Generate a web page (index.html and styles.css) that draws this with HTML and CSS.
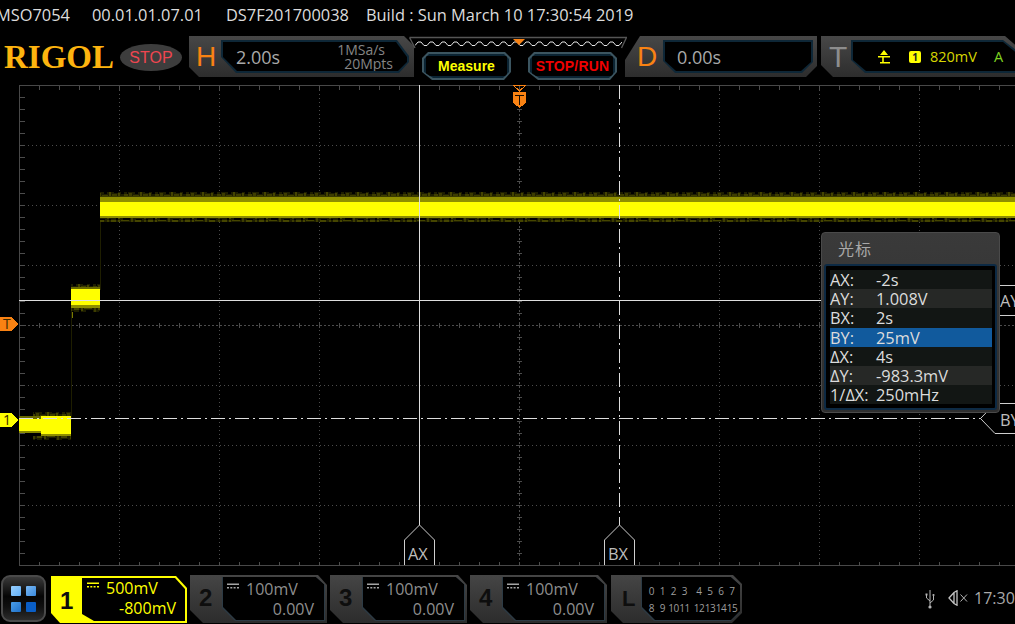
FILE: index.html
```html
<!DOCTYPE html>
<html lang="en">
<head>
<meta charset="utf-8">
<title>MSO7054</title>
<link rel="stylesheet" href="styles.css">
</head>
<body>
<div class="scope">
  <header class="titlebar">
    <span class="t-model">MSO7054</span>
    <span class="t-ver">00.01.01.07.01</span>
    <span class="t-serial">DS7F201700038</span>
    <span class="t-build">Build : Sun March 10 17:30:54 2019</span>
  </header>

  <div class="toolbar">
    <div class="logo">RIGOL</div>
    <div class="pill">STOP</div>

    <div class="panel panel-h">
      <span class="letter letter-orange">H</span>
      <div class="inner-edge edge-h"><div class="inner-fill fill-h">
        <span class="big">2.00s</span>
        <span class="rate"><span>1MSa/s</span><span class="rate-b">20Mpts</span></span>
      </div></div>
    </div>

    <div class="center">
      <svg class="overview" width="218" height="14" viewBox="0 0 218 14">
        <defs>
          <pattern id="zig" width="12" height="8" patternUnits="userSpaceOnUse" x="6" y="4">
            <polyline points="0,5.5 3,2 6,2 9,5.5 12,5.5" fill="none" stroke="#e6e6e6" stroke-width="1"/>
          </pattern>
        </defs>
        <path d="M.5 1.5H217.5L212.5 12M.5 1.5L6 12" fill="none" stroke="#555" stroke-width="1.4"/>
        <rect x="6" y="4" width="207" height="8" fill="url(#zig)"/>
        <path d="M104 3H116L110 9Z" fill="#f98213"/>
      </svg>
      <div class="btn-row">
        <div class="hw-btn"><div class="hw-edge"><div class="hw-fill measure">Measure</div></div></div>
        <div class="hw-btn"><div class="hw-edge"><div class="hw-fill run">STOP/RUN</div></div></div>
      </div>
    </div>

    <div class="panel panel-d">
      <span class="letter letter-orange letter-d">D</span>
      <div class="inner-edge edge-d"><div class="inner-fill fill-d">
        <span class="big">0.00s</span>
      </div></div>
    </div>

    <div class="panel panel-t">
      <span class="letter letter-gray">T</span>
      <div class="inner-edge edge-t"><div class="inner-fill fill-t">
        <svg class="edge-icon" width="12" height="14" viewBox="0 0 12 14">
          <path d="M6 0L10 5H2ZM0 6H12V7.4H5.8V12H12V13.5H2V12H4.2V7.4H0Z" fill="#ffff00"/>
        </svg>
        <span class="badge">1</span>
        <span class="level">820mV</span>
        <span class="mode">A</span>
      </div></div>
    </div>
  </div>

  <main class="screen">
    <svg class="grid" width="1015" height="490" viewBox="0 80 1015 490">
      <defs>
        <pattern id="fringe-up" width="31" height="4" patternUnits="userSpaceOnUse">
          <rect width="31" height="4" fill="#1e1e00"/>
          <rect x="0" y="2" width="4" height="2" fill="#3d3d00"/>
          <rect x="5" y="1" width="3" height="3" fill="#3d3d00"/>
          <rect x="9" y="3" width="6" height="1" fill="#3d3d00"/>
          <rect x="16" y="0" width="2" height="4" fill="#454500"/>
          <rect x="19" y="2" width="5" height="2" fill="#3d3d00"/>
          <rect x="25" y="1" width="2" height="3" fill="#454500"/>
          <rect x="3" y="0" width="1" height="2" fill="#000"/>
          <rect x="11" y="0" width="3" height="2" fill="#000"/>
          <rect x="21" y="0" width="4" height="1" fill="#000"/>
          <rect x="28" y="0" width="3" height="2" fill="#000"/>
        </pattern>
        <pattern id="fringe-down" width="37" height="4" patternUnits="userSpaceOnUse">
          <rect width="37" height="4" fill="#1e1e00"/>
          <rect x="0" y="0" width="5" height="2" fill="#454500"/>
          <rect x="7" y="0" width="2" height="3" fill="#454500"/>
          <rect x="10" y="0" width="8" height="1" fill="#454500"/>
          <rect x="20" y="0" width="2" height="4" fill="#3d3d00"/>
          <rect x="24" y="0" width="6" height="2" fill="#454500"/>
          <rect x="33" y="0" width="2" height="3" fill="#3d3d00"/>
          <rect x="5" y="2" width="2" height="2" fill="#000"/>
          <rect x="12" y="2" width="7" height="2" fill="#000"/>
          <rect x="25" y="3" width="6" height="1" fill="#000"/>
          <rect x="35" y="3" width="2" height="1" fill="#000"/>
        </pattern>
      </defs>

      <!-- graticule -->
      <g class="dots">
        <path d="M20 145.5H1015M20 205.5H1015M20 265.5H1015M20 385.5H1015M20 445.5H1015M20 505.5H1015"/>
        <path d="M119.5 86V565M219.5 86V565M319.5 86V565M719.5 86V565M819.5 86V565M919.5 86V565"/>
      </g>
      <path class="center-line" d="M20 325.5H1015M519.5 86V565"/>
      <path class="ticks t-h" d="M39 325.5H1015"/>
      <path class="ticks t-v" d="M519.5 97V565"/>
      <path class="frame" d="M1015 85.5H19.5V565.5H1015"/>
      <path class="ticks t-top" d="M39 87.5H1015"/>
      <path class="ticks t-bot" d="M39 563.5H1015"/>
      <path class="ticks t-left" d="M22 97V565"/>

      <!-- channel 1 trace -->
      <rect x="71" y="300" width="1" height="120" fill="#1e1e00"/>
      <rect x="100" y="216" width="1" height="74" fill="#1e1e00"/>
      <rect x="72" y="305" width="1" height="13" fill="#7a7a00"/>

      <rect x="100" y="192" width="915" height="4" fill="url(#fringe-up)"/>
      <rect x="100" y="196" width="915" height="1" fill="#3a3a00"/>
      <rect x="100" y="197" width="915" height="5" fill="#8f8f00"/>
      <rect x="100" y="202" width="915" height="14" fill="#ffff00"/>
      <rect x="100" y="216" width="915" height="2" fill="#8f8f00"/>
      <rect x="100" y="218" width="915" height="4" fill="url(#fringe-down)"/>

      <rect x="71" y="284" width="29" height="4" fill="url(#fringe-up)"/>
      <rect x="71" y="287" width="29" height="2" fill="#6a6a00"/>
      <rect x="71" y="289" width="29" height="16" fill="#ffff00"/>
      <rect x="71" y="305" width="29" height="3" fill="#8f8f00"/>
      <rect x="71" y="308" width="29" height="4" fill="url(#fringe-down)"/>

      <rect x="33" y="412" width="38" height="4" fill="url(#fringe-up)"/>
      <rect x="19" y="416" width="52" height="3" fill="#6a6a00"/>
      <rect x="19" y="419" width="52" height="12" fill="#ffff00"/>
      <rect x="41" y="416" width="30" height="18" fill="#ffff00"/>
      <rect x="19" y="431" width="22" height="2" fill="#8a8a00"/>
      <rect x="41" y="434" width="30" height="2" fill="#8f8f00"/>
      <rect x="33" y="436" width="38" height="4" fill="url(#fringe-down)"/>

      <!-- cursors -->
      <path class="cursor" d="M19 300.5H1000"/>
      <path class="cursor" d="M419.5 85V525"/>
      <path class="cursor cursor-dash" d="M619.5 85V525"/>
      <path class="cursor cursor-dash" d="M19 418.5H981"/>

      <path class="tag" d="M404.5 565V540L419.5 525L434.5 540V565"/>
      <path class="tag" d="M604.5 565V540L619.5 525L634.5 540V565"/>
      <path class="tag" d="M1015 285.5H995L980 300.5L995 315.5H1015"/>
      <path class="tag" d="M1015 403.5H995L980.5 418.5L995 433.5H1015"/>
      <text class="tag-text" x="408" y="560">AX</text>
      <text class="tag-text" x="608" y="560">BX</text>
      <text class="tag-text" x="1000" y="307">AY</text>
      <text class="tag-text" x="1000" y="426">BY</text>

      <!-- markers -->
      <path d="M0 317H12L18 324L12 331H0Z" fill="#f98213"/>
      <text class="mark-text" x="3" y="329">T</text>
      <path d="M0 413H12L18 420L12 427H0Z" fill="#ffff00"/>
      <text class="mark-text" x="3" y="425">1</text>
      <path d="M513.5 85.5H525.5L519.5 91Z" fill="none" stroke="#f98213" stroke-width="1"/>
      <path d="M513 92H526V103L519.5 108L513 103Z" fill="#f98213"/>
      <path d="M515 94.5H524V96H520.3V105H518.7V96H515Z" fill="#1a0d00"/>
    </svg>

    <aside class="popup">
      <div class="popup-title">光标</div>
      <div class="popup-edge">
        <dl class="rows">
          <div class="row"><dt>AX:</dt><dd>-2s</dd></div>
          <div class="row"><dt>AY:</dt><dd>1.008V</dd></div>
          <div class="row"><dt>BX:</dt><dd>2s</dd></div>
          <div class="row row-on"><dt>BY:</dt><dd>25mV</dd></div>
          <div class="row"><dt>ΔX:</dt><dd>4s</dd></div>
          <div class="row"><dt>ΔY:</dt><dd>-983.3mV</dd></div>
          <div class="row"><dt>1/ΔX:</dt><dd>250mHz</dd></div>
        </dl>
      </div>
    </aside>
  </main>

  <footer class="bottom">
    <div class="menu-btn">
      <i class="sq sq1"></i><i class="sq sq2"></i><i class="sq sq3"></i><i class="sq sq4"></i>
    </div>

    <div class="ch ch-on">
      <div class="ch-inner">
        <span class="ch-num">1</span>
        <div class="ch-body">
          <div class="ch-line"><svg class="cpl" width="12" height="6" viewBox="0 0 12 6"><path d="M0 .5H12V2H0ZM0 4H2V5.5H0ZM3.3 4H5.3V5.5H3.3ZM6.6 4H8.6V5.5H6.6ZM10 4H12V5.5H10Z"/></svg><span>500mV</span></div>
          <div class="ch-off">-800mV</div>
        </div>
      </div>
    </div>

    <div class="ch">
      <span class="ch-num">2</span>
      <div class="ch-edge"><div class="ch-body">
        <div class="ch-line"><svg class="cpl" width="12" height="6" viewBox="0 0 12 6"><path d="M0 .5H12V2H0ZM0 4H2V5.5H0ZM3.3 4H5.3V5.5H3.3ZM6.6 4H8.6V5.5H6.6ZM10 4H12V5.5H10Z"/></svg><span>100mV</span></div>
        <div class="ch-off">0.00V</div>
      </div></div>
    </div>

    <div class="ch">
      <span class="ch-num">3</span>
      <div class="ch-edge"><div class="ch-body">
        <div class="ch-line"><svg class="cpl" width="12" height="6" viewBox="0 0 12 6"><path d="M0 .5H12V2H0ZM0 4H2V5.5H0ZM3.3 4H5.3V5.5H3.3ZM6.6 4H8.6V5.5H6.6ZM10 4H12V5.5H10Z"/></svg><span>100mV</span></div>
        <div class="ch-off">0.00V</div>
      </div></div>
    </div>

    <div class="ch">
      <span class="ch-num">4</span>
      <div class="ch-edge"><div class="ch-body">
        <div class="ch-line"><svg class="cpl" width="12" height="6" viewBox="0 0 12 6"><path d="M0 .5H12V2H0ZM0 4H2V5.5H0ZM3.3 4H5.3V5.5H3.3ZM6.6 4H8.6V5.5H6.6ZM10 4H12V5.5H10Z"/></svg><span>100mV</span></div>
        <div class="ch-off">0.00V</div>
      </div></div>
    </div>

    <div class="ch ch-la">
      <span class="ch-num">L</span>
      <div class="ch-edge la-edge"><div class="la-body">
        <div class="la-row"><span>0</span><span>1</span><span>2</span><span>3</span><span class="la-gap">4</span><span>5</span><span>6</span><span>7</span></div>
        <div class="la-row"><span>8</span><span>9</span><span>10</span><span>11</span><span class="la-gap">12</span><span>13</span><span>14</span><span>15</span></div>
      </div></div>
    </div>

    <div class="status">
      <svg class="usb" width="10" height="19" viewBox="0 0 10 19">
        <path d="M5 0V17M5 11L1.5 8V5M5 13L8.5 10V6" fill="none" stroke="#b5b5b5" stroke-width="1"/>
        <circle cx="5" cy="17" r="1.6" fill="#b5b5b5"/>
        <rect x="0.5" y="3.5" width="2" height="2" fill="#b5b5b5"/>
        <circle cx="8.5" cy="5" r="1.1" fill="#b5b5b5"/>
      </svg>
      <svg class="spk" width="20" height="16" viewBox="0 0 20 16">
        <path d="M1 8L6 2.5L9 .8V15.2L6 13.5ZM6 2.5V13.5" fill="none" stroke="#c4c4c4" stroke-width="1.3"/>
        <path d="M12.5 4.5L19 11.5M19 4.5L12.5 11.5" fill="none" stroke="#b5b5b5" stroke-width="1"/>
      </svg>
      <span class="clock">17:30</span>
    </div>
  </footer>
</div>
</body>
</html>
```

FILE: styles.css
```css
* { box-sizing: border-box; }

html, body {
  margin: 0;
  padding: 0;
  background: #000;
}

.scope {
  width: 1015px;
  height: 624px;
  overflow: hidden;
  background: #000;
  font-family: "Open Sans", "Noto Sans CJK SC", sans-serif;
  font-size: 16.4px;
}

/* title row */
.titlebar {
  display: flex;
  height: 30px;
  line-height: 30px;
  color: #dcdcdc;
  white-space: nowrap;
  margin-left: -4px;
}
.t-ver { margin-left: 22px; }
.t-serial { margin-left: 23px; }
.t-build { margin-left: 17px; }

/* toolbar */
.toolbar {
  display: flex;
  align-items: flex-start;
  height: 50px;
  padding-top: 6px;
}
.logo {
  flex: none;
  width: 116px;
  margin-left: 4px;
  margin-top: 3px;
  font-family: "Liberation Serif", serif;
  font-weight: 700;
  font-size: 33px;
  line-height: 36px;
  color: #fdb40f;
}
.pill {
  flex: none;
  width: 62px;
  height: 27px;
  margin-top: 8px;
  border-radius: 50%;
  background: #3d3d3d;
  color: #ee4650;
  font-family: "Liberation Sans", sans-serif;
  font-size: 16px;
  line-height: 28px;
  text-align: center;
}
.panel {
  display: flex;
  height: 41px;
  background: linear-gradient(#474747, #2d2d2d);
  flex: none;
}
.panel-h {
  width: 225px;
  margin-left: 7px;
  clip-path: polygon(0 0, 215px 0, 225px 10px, 225px 41px, 10px 41px, 0 31px);
}
.panel-d {
  width: 192px;
  margin-left: -2px;
  clip-path: polygon(15px 0, 192px 0, 192px 30px, 181px 41px, 0 41px, 0 24px);
}
.panel-t {
  width: 200px;
  margin-left: 4px;
  clip-path: polygon(0 0, 184px 0, 200px 14px, 200px 41px, 12px 41px, 0 29px);
}
.letter {
  font-family: "Liberation Sans", sans-serif;
  font-size: 28px;
  line-height: 41px;
  flex: none;
}
.letter-orange { color: #f98213; }
.letter-gray { color: #8d8d8d; }
.panel-h .letter { width: 32px; padding-left: 7px; }
.letter-d { width: 38px; padding-left: 12px; }
.panel-t .letter { width: 30px; padding-left: 8px; font-size: 30px; }

.inner-edge {
  height: 33px;
  margin-top: 4px;
  padding: 2px;
  background: #0e2737;
}
.inner-fill {
  display: flex;
  align-items: center;
  height: 29px;
  background: #000;
}
.edge-h {
  width: 188px;
  clip-path: polygon(0 0, 176px 0, 188px 16px, 188px 22px, 178px 33px, 15px 33px, 0 17px);
}
.fill-h {
  clip-path: polygon(0 0, 173px 0, 184px 15px, 184px 20px, 175px 29px, 14px 29px, 0 15px);
  padding-left: 13px;
}
.edge-d {
  width: 150px;
  clip-path: polygon(0 0, 150px 0, 150px 22px, 139px 33px, 12px 33px, 0 21px);
}
.fill-d {
  clip-path: polygon(0 0, 146px 0, 146px 20px, 136px 29px, 11px 29px, 0 19px);
  padding-left: 12px;
}
.edge-t {
  width: 170px;
  clip-path: polygon(0 0, 152px 0, 170px 14px, 170px 33px, 14px 33px, 0 20px);
}
.fill-t {
  clip-path: polygon(0 0, 150px 0, 166px 13px, 166px 29px, 13px 29px, 0 18px);
}
.big {
  font-size: 18px;
  color: #a9a9a9;
}
.rate {
  display: flex;
  flex-direction: column;
  margin-left: 57px;
  font-size: 14px;
  line-height: 14px;
  color: #858585;
}
.rate-b { margin-left: 7px; }
.edge-icon { margin-left: 25px; flex: none; }
.badge {
  width: 12px;
  height: 12px;
  margin-left: 19px;
  border-radius: 2px;
  background: #ffff00;
  color: #222;
  font-size: 10px;
  font-weight: 700;
  line-height: 12px;
  text-align: center;
}
.level {
  margin-left: 9px;
  color: #d6d600;
  font-size: 14.5px;
}
.mode {
  margin-left: 17px;
  color: #7ed321;
  font-size: 14.5px;
}

.center {
  width: 218px;
  margin-left: -5px;
  flex: none;
  position: relative;
}
.overview { display: block; }
.btn-row {
  display: flex;
  gap: 17px;
  margin-top: 2px;
  padding-left: 13px;
}
.hw-btn {
  width: 89px;
  height: 28px;
  padding: 2px;
  background: #3c5560;
  clip-path: polygon(6px 0, 83px 0, 89px 6px, 89px 20px, 82px 28px, 10px 28px, 0 20px, 0 6px);
}
.hw-edge {
  height: 24px;
  padding: 2px;
  background: #0b2433;
  clip-path: polygon(5px 0, 80px 0, 85px 5px, 85px 18px, 79px 24px, 9px 24px, 0 18px, 0 5px);
}
.hw-fill {
  height: 20px;
  background: #000;
  font-family: "Liberation Sans", sans-serif;
  font-weight: 700;
  font-size: 14px;
  line-height: 20px;
  text-align: center;
  white-space: nowrap;
}
.measure { color: #ffff00; }
.run { color: #f00000; letter-spacing: .2px; }

/* screen */
.screen {
  position: relative;
  height: 490px;
}
.grid {
  display: block;
  shape-rendering: crispEdges;
}
.dots path {
  fill: none;
  stroke: #4c4c4c;
  stroke-width: 1;
  stroke-dasharray: 1 3;
}
.center-line {
  fill: none;
  stroke: #4c4c4c;
  stroke-dasharray: 2 2;
}
.frame {
  fill: none;
  stroke: #484848;
  stroke-width: 1;
}
.ticks {
  fill: none;
  stroke: #4c4c4c;
}
.t-h { stroke-width: 5; stroke-dasharray: 1 19; }
.t-v { stroke-width: 5; stroke-dasharray: 1 11; }
.t-top, .t-bot { stroke-width: 4; stroke-dasharray: 1 19; }
.t-left { stroke-width: 5; stroke-dasharray: 1 11; }
.cursor {
  fill: none;
  stroke: #dedede;
  stroke-width: 1;
}
.cursor-dash { stroke-dasharray: 14 4 2 4; }
.tag {
  fill: #000;
  stroke: #cfcfcf;
  stroke-width: 1;
  shape-rendering: geometricPrecision;
}
.tag-text {
  font-size: 16.4px;
  fill: #bdbdbd;
}
.mark-text {
  font-size: 14px;
  fill: #3a2a00;
}

/* cursor pop-up */
.popup {
  position: absolute;
  left: 821px;
  top: 152px;
  width: 179px;
  height: 181px;
  padding: 0 2px 2px;
  background: linear-gradient(#3a3a3a, #2e2e2e);
  border: 1px solid #4a4a4a;
  border-radius: 4px;
}
.popup-title {
  height: 31px;
  padding-left: 14px;
  color: #a8a8a8;
  font-family: "Noto Sans CJK SC", sans-serif;
  font-size: 16px;
  line-height: 31px;
  letter-spacing: 1px;
}
.popup-edge {
  height: 146px;
  padding: 4px 3px 4px 4px;
  background: #000;
  border: 2px solid #0d2a44;
  border-radius: 3px;
}
.rows { margin: 0; }
.row {
  display: flex;
  height: 19.2px;
  background: #121614;
  color: #dcdcdc;
  line-height: 19px;
  white-space: nowrap;
}
.row:nth-child(even) { background: #262826; }
.row.row-on { background: #115a9d; }
.row dt { width: 46px; }
.row dd { margin: 0; }

/* bottom bar */
.bottom {
  display: flex;
  align-items: flex-start;
  height: 54px;
  padding: 5px 0 0 1px;
}
.menu-btn {
  flex: none;
  display: grid;
  grid-template-columns: 10px 10px;
  grid-auto-rows: 10px;
  gap: 6px 5px;
  justify-content: center;
  align-content: center;
  width: 45px;
  height: 47px;
  border: 2px solid #4a4a4a;
  border-radius: 9px;
  background: linear-gradient(#3a3a3a, #050505 45%, #101010 70%, #2c2c2c);
}
.sq { border-radius: 1px; }
.sq1 { background: linear-gradient(135deg, #98d0ff, #62aef5); }
.sq2 { background: linear-gradient(135deg, #7ab8f2, #3a8ade); }
.sq3 { background: linear-gradient(135deg, #4a9ee8, #1f70c8); }
.sq4 { background: #0a5ec6; }

.ch {
  position: relative;
  flex: none;
  display: flex;
  width: 137px;
  height: 48px;
  margin-left: 3px;
  background: linear-gradient(#454545, #2c2c2c);
  clip-path: polygon(0 0, 128px 0, 137px 10px, 137px 48px, 13px 48px, 0 35px);
}
.ch-num {
  flex: none;
  width: 32px;
  padding: 10px 0 0 9px;
  font-family: "Liberation Sans", sans-serif;
  font-weight: 700;
  font-size: 24px;
  line-height: 26px;
  color: #0e0e0e;
}
.ch-edge {
  flex: 1;
  height: 44px;
  margin: 2px 2px 0 0;
  padding: 0 0 0 1px;
  background: #2c3a44;
  clip-path: polygon(0 0, 94px 0, 103px 8px, 103px 44px, 13px 44px, 0 31px);
}
.ch-body {
  height: 43px;
  background: #000;
  color: #8e8e8e;
  padding-top: 2px;
  font-size: 16px;
  line-height: 20px;
  clip-path: polygon(0 0, 93px 0, 102px 8px, 102px 43px, 13px 43px, 0 30px);
}
.ch-edge .ch-body { width: 101px; }
.ch-line {
  display: flex;
  align-items: center;
  padding-left: 4px;
}
.ch-line span { margin-left: 7px; }
.cpl { fill: #a5a5a5; flex: none; margin-top: -7px; }
.ch-off {
  text-align: right;
  padding-right: 10px;
}

.ch-on {
  width: 136px;
  height: 47px;
  margin-left: 5px;
  margin-top: 1px;
  background: #ffff00;
  clip-path: polygon(0 0, 125px 0, 136px 12px, 136px 47px, 9px 47px, 0 37px);
}
.ch-inner {
  display: flex;
  width: 100%;
}
.ch-on .ch-num {
  width: 31px;
  padding: 12px 0 0 9px;
}
.ch-on .ch-body {
  width: 103px;
  height: 43px;
  margin-top: 2px;
  padding-top: 0;
  color: #ffff00;
  clip-path: polygon(0 0, 93px 0, 103px 11px, 103px 43px, 12px 43px, 0 36px);
}
.ch-on .cpl { fill: #ffff00; }
.ch-on .ch-line { padding-left: 5px; }
.ch-on .ch-off { padding-right: 9px; }

.ch-la {
  width: 131px;
  margin-left: 4px;
  clip-path: polygon(0 0, 122px 0, 131px 9px, 131px 38px, 121px 48px, 12px 48px, 0 36px);
}
.ch-la .ch-num { width: 30px; padding: 11px 0 0 11px; font-size: 22px; }
.la-edge {
  clip-path: polygon(0 0, 90px 0, 99px 8px, 99px 35px, 90px 44px, 13px 44px, 0 31px);
}
.la-body {
  height: 43px;
  padding: 8px 0 0 4px;
  background: #000;
  clip-path: polygon(0 0, 89px 0, 98px 8px, 98px 34px, 89px 43px, 13px 43px, 0 30px);
}
.la-row {
  display: flex;
  color: #9d9d9d;
  font-size: 10px;
  line-height: 13px;
  height: 17px;
  letter-spacing: -0.4px;
}
.la-row span {
  width: 11px;
  text-align: center;
  white-space: nowrap;
}
.la-row .la-gap { margin-left: 3.5px; }

.status {
  flex: 1;
  display: flex;
  align-items: center;
  height: 46px;
  margin-left: 183px;
  white-space: nowrap;
}
.usb { flex: none; margin-top: 3px; }
.spk { flex: none; margin-left: 13px; }
.clock {
  margin-left: 6px;
  color: #a9a9a9;
  font-size: 16px;
}
```
